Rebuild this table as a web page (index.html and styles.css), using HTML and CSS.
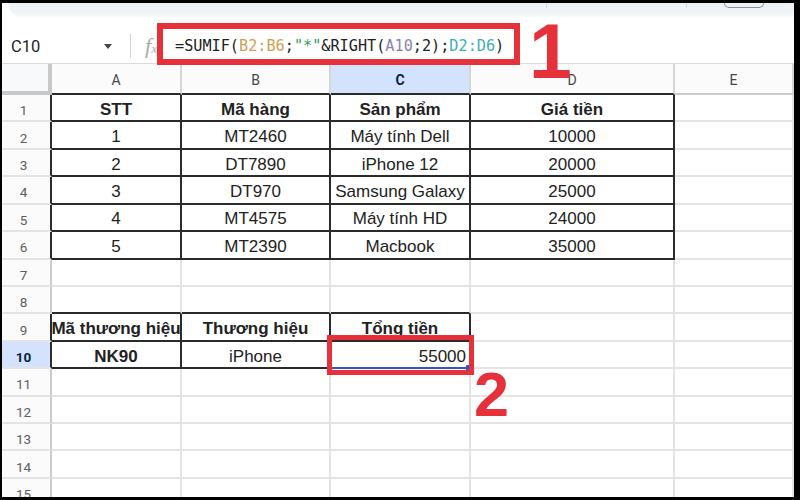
FILE: index.html
```html
<!DOCTYPE html>
<html lang="vi">
<head>
<meta charset="utf-8">
<title>SUMIF</title>
<link rel="stylesheet" href="styles.css">
</head>
<body>
<div class="page">
  <div class="frame">
    <div class="toolbar">
      <div class="pill">
        <span class="tsep tsep1"></span>
        <span class="tsep tsep2"></span>
        <span class="tbtn"></span>
      </div>
    </div>
    <div class="fbar">
      <div class="namebox"><span class="ref">C10</span><span class="caret"></span></div>
      <span class="vsep"></span>
      <div class="fx"><i>f</i><span class="sub">x</span></div>
      <div class="formula">=SUMIF(<span class="f-b">B2:B6</span>;<span class="f-s">"*"</span>&amp;RIGHT(<span class="f-a">A10</span>;2);<span class="f-d">D2:D6</span>)</div>
    </div>
    <div class="grid">
      <!-- header -->
      <div class="c corner"></div>
      <div class="c ch kb">A</div>
      <div class="c ch kb">B</div>
      <div class="c ch kb selh">C</div>
      <div class="c ch kb">D</div>
      <div class="c ch">E</div>
      <!-- 1 -->
      <div class="c rh kr">1</div>
      <div class="c k b">STT</div>
      <div class="c k b">Mã hàng</div>
      <div class="c k b">Sản phẩm</div>
      <div class="c k b">Giá tiền</div>
      <div class="c"></div>
      <!-- 2 -->
      <div class="c rh kr">2</div>
      <div class="c k">1</div>
      <div class="c k">MT2460</div>
      <div class="c k">Máy tính Dell</div>
      <div class="c k">10000</div>
      <div class="c"></div>
      <!-- 3 -->
      <div class="c rh kr">3</div>
      <div class="c k">2</div>
      <div class="c k">DT7890</div>
      <div class="c k">iPhone 12</div>
      <div class="c k">20000</div>
      <div class="c"></div>
      <!-- 4 -->
      <div class="c rh kr">4</div>
      <div class="c k">3</div>
      <div class="c k">DT970</div>
      <div class="c k">Samsung Galaxy</div>
      <div class="c k">25000</div>
      <div class="c"></div>
      <!-- 5 -->
      <div class="c rh kr">5</div>
      <div class="c k">4</div>
      <div class="c k">MT4575</div>
      <div class="c k">Máy tính HD</div>
      <div class="c k">24000</div>
      <div class="c"></div>
      <!-- 6 -->
      <div class="c rh kr">6</div>
      <div class="c k">5</div>
      <div class="c k">MT2390</div>
      <div class="c k">Macbook</div>
      <div class="c k">35000</div>
      <div class="c"></div>
      <!-- 7 -->
      <div class="c rh">7</div>
      <div class="c"></div><div class="c"></div><div class="c"></div><div class="c"></div><div class="c"></div>
      <!-- 8 -->
      <div class="c rh">8</div>
      <div class="c kb"></div><div class="c kb"></div><div class="c kb"></div><div class="c"></div><div class="c"></div>
      <!-- 9 -->
      <div class="c rh kr">9</div>
      <div class="c k b">Mã thương hiệu</div>
      <div class="c k b">Thương hiệu</div>
      <div class="c k b">Tổng tiền</div>
      <div class="c"></div>
      <div class="c"></div>
      <!-- 10 -->
      <div class="c rh kr selh">10</div>
      <div class="c k b">NK90</div>
      <div class="c k">iPhone</div>
      <div class="c k r active">55000<span class="handle"></span></div>
      <div class="c"></div>
      <div class="c"></div>
      <!-- 11-15 -->
      <div class="c rh">11</div>
      <div class="c"></div><div class="c"></div><div class="c"></div><div class="c"></div><div class="c"></div>
      <div class="c rh">12</div>
      <div class="c"></div><div class="c"></div><div class="c"></div><div class="c"></div><div class="c"></div>
      <div class="c rh">13</div>
      <div class="c"></div><div class="c"></div><div class="c"></div><div class="c"></div><div class="c"></div>
      <div class="c rh">14</div>
      <div class="c"></div><div class="c"></div><div class="c"></div><div class="c"></div><div class="c"></div>
      <div class="c rh">15</div>
      <div class="c"></div><div class="c"></div><div class="c"></div><div class="c"></div><div class="c"></div>
    </div>
  </div>
  <div class="mark mark1"></div>
  <div class="mark mark2"></div>
  <div class="num num1">1</div>
  <div class="num num2">2</div>
</div>
</body>
</html>
```

FILE: styles.css
```css
* { box-sizing: border-box; }
html, body { margin: 0; padding: 0; background: #000; }

.page {
  position: relative;
  width: 800px;
  height: 500px;
  overflow: hidden;
}

.frame {
  width: 800px;
  height: 500px;
  border-style: solid;
  border-color: #000;
  border-width: 3px 6px 3px 2px;
  background: #fff;
  display: flex;
  flex-direction: column;
  overflow: hidden;
  font-family: "Liberation Sans", Arial, sans-serif;
  color: #222;
}

/* toolbar remnant */
.toolbar {
  height: 14px;
  flex: none;
  background: #fff;
  padding-left: 6px;
}
.pill {
  height: 100%;
  background: linear-gradient(#edf1f6, #f1f4f8 70%, #f9fafb);
  border-bottom-left-radius: 22px;
  display: flex;
  align-items: flex-start;
}
.tsep {
  width: 1px;
  height: 5px;
  background: #d5d8dc;
}
.tsep1 { margin-left: 538px; }
.tsep2 { margin-left: 139px; }
.tbtn {
  width: 40px;
  height: 5px;
  margin-left: 37px;
  border: 1px solid #8a8f94;
  border-top: none;
  border-radius: 0 0 6px 6px;
}

/* formula bar */
.fbar {
  height: 47px;
  flex: none;
  display: flex;
  align-items: center;
  padding-top: 12px;
  border-bottom: 1px solid #d9dcdf;
}
.namebox {
  width: 128px;
  display: flex;
  align-items: center;
  justify-content: space-between;
  padding-left: 9px;
  padding-right: 18px;
}
.ref {
  font-family: Roboto, "Liberation Sans", sans-serif;
  font-size: 16.5px;
  color: #1f1f1f;
}
.caret {
  width: 0;
  height: 0;
  border-left: 4px solid transparent;
  border-right: 4px solid transparent;
  border-top: 5px solid #444;
}
.vsep {
  width: 1px;
  height: 24px;
  background: #d0d3d6;
}
.fx {
  width: 26px;
  padding-left: 14px;
  font-family: "Liberation Serif", serif;
  color: #a7abaf;
  font-size: 22px;
  line-height: 1;
  white-space: nowrap;
}
.fx .sub { font-size: 13px; font-style: italic; }
.formula {
  padding-left: 18px;
  font-family: "DejaVu Sans Mono", "Liberation Mono", monospace;
  font-size: 15.2px;
  color: #202124;
  white-space: nowrap;
}
.f-b { color: #cf9f55; }
.f-s { color: #2e9e55; }
.f-a { color: #8d80b8; }
.f-d { color: #3eaeb8; }

/* grid */
.grid {
  flex: 1;
  display: grid;
  grid-template-columns: 50px 130px 149px 140px 204px 1fr;
  grid-template-rows: 31px repeat(15, 27.43px);
  overflow: hidden;
}
.c {
  border-right: 2px solid #e4e4e4;
  border-bottom: 2px solid #e4e4e4;
  display: flex;
  align-items: center;
  justify-content: center;
  overflow: hidden;
  white-space: nowrap;
  font-size: 17px;
  padding-top: 4px;
  min-width: 0;
}
.corner {
  background: #f8f9fa;
  border-right: 4px solid #c6c8ca;
  border-bottom: 4px solid #c6c8ca;
}
.ch {
  background: #fbfbfb;
  font-family: Roboto, "Liberation Sans", sans-serif;
  font-size: 14px;
  color: #444746;
  padding-top: 3px;
  border-bottom-color: #c9cbcd;
  border-right-color: #d4d6d8;
}
.rh {
  background: #fbfbfb;
  font-family: Roboto, "Liberation Sans", sans-serif;
  font-size: 13.5px;
  color: #5a5e62;
  padding-right: 5px;
  padding-top: 5px;
  border-right-color: #c9cbcd;
}
.selh {
  background: #d3e3fd;
  color: #0b1f3f;
  font-weight: bold;
}
.k { border-right-color: #2b2b2b; border-bottom-color: #2b2b2b; }
.kb { border-bottom-color: #2b2b2b; }
.kr { border-right-color: #2b2b2b; }
.b { font-weight: bold; }
.r { justify-content: flex-end; padding-right: 3px; }

.active {
  position: relative;
  overflow: visible;
  border-bottom: 2px solid #3455c4;
}
.handle {
  position: absolute;
  right: -3px;
  bottom: -4px;
  width: 6px;
  height: 6px;
  background: #3455c4;
  border-radius: 1px;
}

/* annotations */
.mark {
  position: absolute;
  border: 6px solid #e6303a;
}
.mark1 { left: 157px; top: 23px; width: 363px; height: 42px; }
.mark2 { left: 327px; top: 335px; width: 147px; height: 40px; border-width: 5px; }

.num {
  position: absolute;
  font-family: "Liberation Sans", Arial, sans-serif;
  font-weight: bold;
  color: #e6303a;
  line-height: 1;
}
.num1 { left: 529px; top: 13px; font-size: 77px; }
.num2 { left: 474px; top: 363px; font-size: 63px; }
```
